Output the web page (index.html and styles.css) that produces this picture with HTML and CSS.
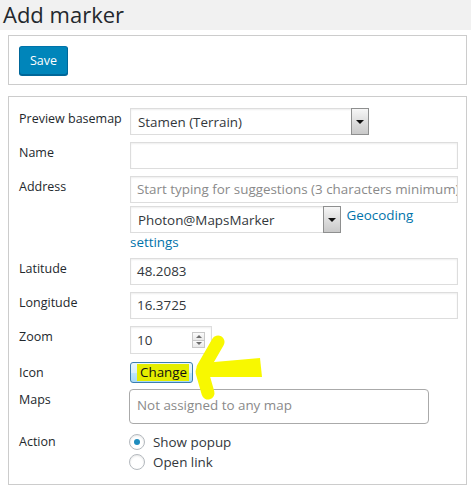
FILE: index.html
```html
<!DOCTYPE html>
<html>
<head>
<meta charset="utf-8">
<link rel="stylesheet" href="styles.css">
</head>
<body>
<h1 class="title">Add marker</h1>
<div class="wrap">
  <div class="card card-top">
    <button class="btn-primary">Save</button>
  </div>
  <div class="card card-form">
    <div class="row">
      <div class="label">Preview basemap</div>
      <div class="field">
        <div class="select basemap"><span class="select-text">Stamen (Terrain)</span><span class="select-arrow"></span></div>
      </div>
    </div>
    <div class="row gap7">
      <div class="label">Name</div>
      <div class="field"><div class="input"></div></div>
    </div>
    <div class="row gap7">
      <div class="label">Address</div>
      <div class="field">
        <div class="input placeholder">Start typing for suggestions (3 characters minimum)</div>
        <div class="geo"><div class="select photon"><span class="select-text">Photon@MapsMarker</span><span class="select-arrow"></span></div> <a class="link" href="#">Geocoding<br>settings</a></div>
      </div>
    </div>
    <div class="row gap7">
      <div class="label">Latitude</div>
      <div class="field"><div class="input">48.2083</div></div>
    </div>
    <div class="row gap7">
      <div class="label">Longitude</div>
      <div class="field"><div class="input">16.3725</div></div>
    </div>
    <div class="row gap7">
      <div class="label">Zoom</div>
      <div class="field">
        <div class="number"><span class="number-text">10</span><span class="spin"><span class="spin-up"></span><span class="spin-down"></span></span></div>
      </div>
    </div>
    <div class="row gap8">
      <div class="label">Icon</div>
      <div class="field"><button class="btn-change"><span class="hl">Change</span></button></div>
    </div>
    <div class="row gap6">
      <div class="label">Maps</div>
      <div class="field"><div class="maps">Not assigned to any map</div></div>
    </div>
    <div class="row gap8">
      <div class="label label-action">Action</div>
      <div class="field">
        <div class="radio-line"><span class="radio checked"></span>Show popup</div>
        <div class="radio-line"><span class="radio"></span>Open link</div>
      </div>
    </div>
    <svg class="arrow" width="80" height="70" viewBox="190 335 80 70" aria-hidden="true">
      <path d="M218 342 L203 368" stroke="#f8f800" stroke-width="13" stroke-linecap="round" fill="none"/>
      <path d="M202 372 L208 393" stroke="#f8f800" stroke-width="13" stroke-linecap="round" fill="none"/>
      <path d="M203 363 L260 358 L262 377 L204 377 Z" fill="#f8f800"/>
    </svg>
  </div>
</div>
</body>
</html>
```

FILE: styles.css
```css
html, body {
  margin: 0;
  padding: 0;
}
body {
  background: #f1f1f1;
  font-family: "Open Sans", "Noto Sans", sans-serif;
  color: #23282d;
  width: 471px;
  height: 487px;
  overflow: hidden;
}
.title {
  margin: 0;
  height: 30px;
  padding: 0 0 0 3px;
  font-size: 22px;
  font-weight: 400;
  line-height: 28px;
  color: #23282d;
}
.wrap {
  background: #fff;
  padding: 5px 4px 0 8px;
  height: 452px;
}
.card {
  border: 1px solid #ccc;
  background: #fff;
}
.card-top {
  padding: 10px 10px 9px;
}
.btn-primary {
  display: block;
  height: 29px;
  width: 49px;
  padding: 0;
  border: 1px solid #0073aa;
  border-color: #0073aa #006799 #006799;
  border-radius: 3px;
  background: #0085ba;
  box-shadow: 0 1px 0 #006799;
  color: #fff;
  font-family: inherit;
  font-size: 12.5px;
  line-height: 27px;
}
.card-form {
  position: relative;
  margin-top: 11px;
  padding: 11px 10px 13px;
  height: 363px;
}
.row {
  display: flex;
}
.gap6 { margin-top: 6px; }
.gap7 { margin-top: 7px; }
.gap8 { margin-top: 8px; }
.label {
  width: 111px;
  flex: none;
  font-size: 12.5px;
  line-height: 20px;
  padding-top: 1px;
  color: #23282d;
}
.label-action {
  padding-top: 0;
}
.field {
  flex: 1;
  min-width: 0;
  font-size: 13.4px;
  color: #32373c;
}
.input {
  box-sizing: border-box;
  height: 27px;
  width: 328px;
  border: 1px solid #ddd;
  box-shadow: inset 0 1px 2px rgba(0,0,0,.07);
  background: #fff;
  padding: 0 6px;
  line-height: 25px;
  white-space: nowrap;
  overflow: hidden;
}
.placeholder {
  color: #8a8a8a;
}
.select {
  box-sizing: border-box;
  height: 27px;
  border: 1px solid #ddd;
  background: #fff;
  display: flex;
  align-items: stretch;
  box-shadow: inset 0 1px 2px rgba(0,0,0,.07);
}
.basemap { width: 239px; }
.photon { width: 211px; }
.select-text {
  flex: 1;
  padding: 0 7px;
  line-height: 26px;
  white-space: nowrap;
  overflow: hidden;
}
.select-arrow {
  flex: none;
  width: 16px;
  margin: -1px -1px -1px 0;
  border: 1px solid #8e8f8f;
  background: linear-gradient(#f6f6f6, #dcdcdc 55%, #c9c9c9);
  position: relative;
}
.select-arrow::after {
  content: "";
  position: absolute;
  left: 4px;
  top: 11px;
  border-left: 4px solid transparent;
  border-right: 4px solid transparent;
  border-top: 4px solid #111;
}
.geo {
  margin-top: 3px;
  line-height: 18px;
}
.geo .select {
  display: inline-flex;
  vertical-align: top;
}
.link {
  color: #0073aa;
  text-decoration: none;
  margin-left: 2px;
}
.number {
  box-sizing: border-box;
  width: 82px;
  height: 28px;
  border: 1px solid #ddd;
  box-shadow: inset 0 1px 2px rgba(0,0,0,.07);
  display: flex;
  align-items: center;
  padding: 0 6px;
}
.number-text {
  flex: 1;
  line-height: 26px;
}
.spin {
  width: 13px;
  height: 16px;
  display: flex;
  flex-direction: column;
  margin-right: 0;
}
.spin-up, .spin-down {
  flex: 1;
  box-sizing: border-box;
  border: 1px solid #c8c8c8;
  background: linear-gradient(#fbfbfb, #e9e9e9);
  position: relative;
}
.spin-down { border-top: 0; }
.spin-up::after, .spin-down::after {
  content: "";
  position: absolute;
  left: 3px;
  top: 2px;
  border-left: 3px solid transparent;
  border-right: 3px solid transparent;
}
.spin-up::after { border-bottom: 3px solid #6d6d6d; }
.spin-down::after { border-top: 3px solid #6d6d6d; top: 1px; }
.btn-change {
  display: block;
  box-sizing: border-box;
  width: 63px;
  height: 21px;
  padding: 0 3px 0 6px;
  border: 1px solid #3c7fb1;
  border-radius: 3px;
  background: linear-gradient(#eaf6fd, #d9f0fc 50%, #bee6fd 51%, #a7d9f5);
  font-family: inherit;
  font-size: 13.4px;
  color: #111;
  text-align: left;
  line-height: 17px;
}
.hl {
  display: block;
  background: #e4ee00;
  padding: 0 2px 0 3px;
  height: 17px;
}
.maps {
  box-sizing: border-box;
  margin-left: -1px;
  width: 300px;
  height: 35px;
  border: 1px solid #aaa;
  border-radius: 4px;
  padding: 0 7px;
  line-height: 31px;
  color: #8a8a8a;
}
.radio-line {
  display: flex;
  align-items: center;
  height: 20px;
  margin-left: -1px;
}
.radio {
  box-sizing: border-box;
  width: 16px;
  height: 16px;
  border: 1px solid #b4b9be;
  border-radius: 50%;
  box-shadow: inset 0 1px 2px rgba(0,0,0,.1);
  margin-right: 8px;
  position: relative;
  flex: none;
}
.radio.checked::after {
  content: "";
  position: absolute;
  left: 4px;
  top: 4px;
  width: 6px;
  height: 6px;
  border-radius: 50%;
  background: #1e8cbe;
}
.arrow {
  position: absolute;
  left: 181px;
  top: 238px;
}
```
